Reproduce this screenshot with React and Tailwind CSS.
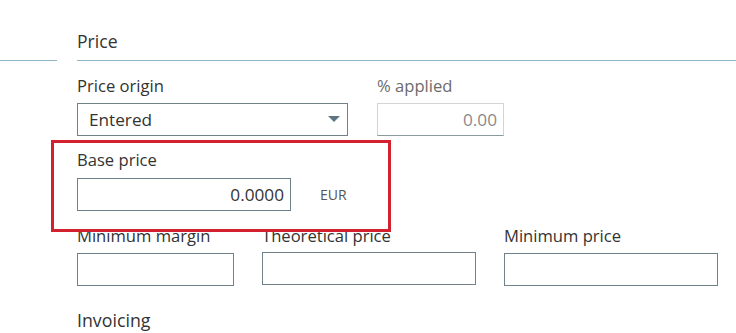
import React from "react";

const font = { fontFamily: '"Open Sans", "Noto Sans", sans-serif' };

function Label({ children, muted }) {
  return (
    <div className={`text-[16.6px] leading-[22px] whitespace-nowrap ${muted ? "text-[#6b6b6b]" : "text-[#333333]"}`}>
      {children}
    </div>
  );
}

function Box({ className = "", children }) {
  return (
    <div className={`h-[33px] border border-[#6f8289] bg-white flex items-center ${className}`}>
      {children}
    </div>
  );
}

export default function App() {
  return (
    <div className="relative w-[736px] h-[333px] overflow-hidden bg-white" style={font}>
      <div className="pl-[77px] pt-[29px]">
        <div className="text-[17.6px] leading-[24px] text-[#333333]">Price</div>
      </div>
      <div className="mt-[7px] flex h-px">
        <div className="w-[57px] bg-[#8db3c7]" />
        <div className="ml-[20px] flex-1 bg-[#8db3c7]" />
      </div>

      <div className="pl-[77px]">
        {/* Row 1 */}
        <div className="mt-[14px] flex gap-[29px]">
          <div className="w-[271px]">
            <Label>Price origin</Label>
            <Box className="mt-[6px] pl-[11px] pr-[6px] justify-between">
              <span className="text-[17.2px] text-[#333333]">Entered</span>
              <svg width="12" height="7" viewBox="0 0 12 7" className="mr-[1px]">
                <path d="M0 0 L12 0 L6 6 Z" fill="#5e7682" />
              </svg>
            </Box>
          </div>
          <div className="w-[127px]">
            <Label muted>% applied</Label>
            <div className="mt-[6px] h-[33px] border border-[#d4d4d4] border-b-[#8a9aa0] flex items-center justify-end pr-[6px]">
              <span className="text-[17.2px] text-[#8a8a8a]">0.00</span>
            </div>
          </div>
        </div>

        {/* Row 2 */}
        <div className="mt-[13px]">
          <Label>Base price</Label>
          <div className="mt-[7px] flex items-center">
            <Box className="w-[214px] justify-end pr-[6px]">
              <span className="text-[17.2px] text-[#333333]">0.0000</span>
            </Box>
            <span className="ml-[29px] text-[14px] text-[#555]">EUR</span>
          </div>
        </div>

        {/* Row 3 */}
        <div className="mt-[14px] flex gap-[28px]">
          <div className="w-[157px]">
            <Label>Minimum margin</Label>
            <Box className="mt-[6px]" />
          </div>
          <div className="w-[214px]">
            <Label>Theoretical price</Label>
            <Box className="mt-[5px]" />
          </div>
          <div className="w-[214px]">
            <Label>Minimum price</Label>
            <Box className="mt-[6px]" />
          </div>
        </div>

        <div className="mt-[22px] text-[17.8px] leading-[24px] text-[#333333]">Invoicing</div>
      </div>

      <div className="absolute left-[51px] top-[140px] w-[340px] h-[92px] border-[3px] border-[#d3212f] pointer-events-none" />
    </div>
  );
}
